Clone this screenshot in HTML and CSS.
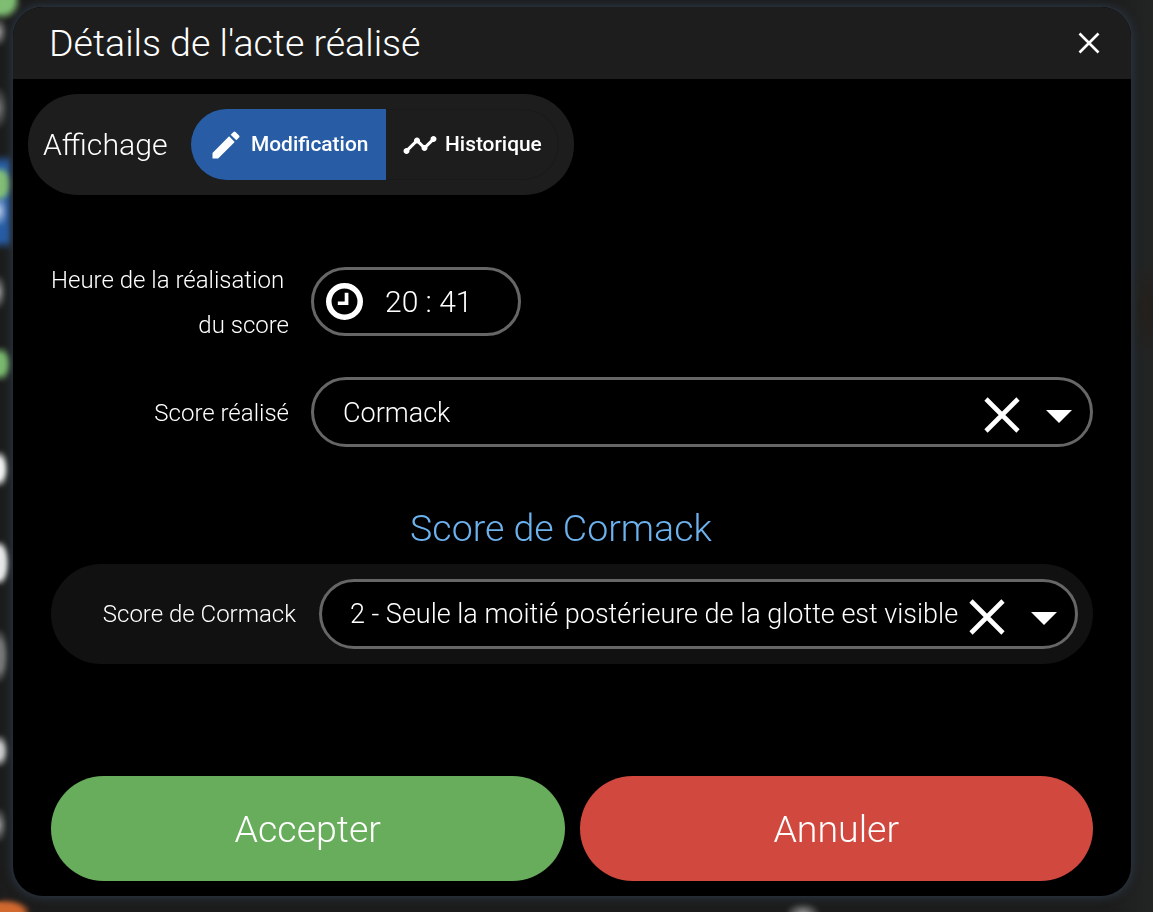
FILE: index.html
```html
<!DOCTYPE html>
<html lang="fr">
<head>
  <meta charset="UTF-8" />
  <meta name="viewport" content="width=device-width, initial-scale=1.0" />
  <title>Détails de l'acte réalisé</title>
  <link rel="stylesheet" href="styles.css">
</head>
<body>
  <div class="modal">
    <header class="modal-header">
      <h1>Détails de l'acte réalisé</h1>
      <svg class="close" viewBox="0 0 22 22"><path d="M1.5 1.5l19 19M20.5 1.5l-19 19" /></svg>
    </header>

    <div class="toolbar">
      <span class="toolbar-label">Affichage</span>
      <div class="toggle">
        <button class="toggle-btn edit active">
          <svg viewBox="0 0 24 24"><path d="M3 17.25V21h3.75L17.81 9.94l-3.75-3.75L3 17.25zM20.71 7.04a1 1 0 0 0 0-1.41l-2.34-2.34a1 1 0 0 0-1.41 0l-1.83 1.83 3.75 3.75 1.83-1.83z" /></svg>
          <span>Modification</span>
        </button>
        <button class="toggle-btn history">
          <svg viewBox="0 0 24 24"><path d="M23 8c0 1.1-.9 2-2 2-.18 0-.35-.02-.51-.07l-3.56 3.55c.05.16.07.34.07.52 0 1.1-.9 2-2 2s-2-.9-2-2c0-.18.02-.36.07-.52l-2.55-2.55c-.16.05-.34.07-.52.07s-.36-.02-.52-.07l-4.55 4.56c.05.16.07.33.07.51 0 1.1-.9 2-2 2s-2-.9-2-2 .9-2 2-2c.18 0 .35.02.51.07l4.56-4.55C8.02 9.36 8 9.18 8 9c0-1.1.9-2 2-2s2 .9 2 2c0 .18-.02.36-.07.52l2.55 2.55c.16-.05.34-.07.52-.07s.36.02.52.07l3.55-3.56C19.02 8.35 19 8.18 19 8c0-1.1.9-2 2-2s2 .9 2 2z" /></svg>
          <span>Historique</span>
        </button>
      </div>
    </div>

    <div class="form">
      <div class="row row-time">
        <label>Heure de la réalisation&nbsp;<br>du score</label>
        <div class="field time">
          <svg class="clock" viewBox="0 0 36 36"><circle cx="18" cy="18" r="15.3" /><path d="M20 9.5V19.7H11.5" /></svg>
          <span>20 : 41</span>
        </div>
      </div>

      <div class="row row-score">
        <label>Score réalisé</label>
        <div class="field select">
          <span>Cormack</span>
          <svg class="clear" viewBox="0 0 36 36"><path d="M2 2l32 32M34 2L2 34" /></svg>
          <i class="caret"></i>
        </div>
      </div>

      <h2>Score de Cormack</h2>

      <div class="panel">
        <label>Score de Cormack</label>
        <div class="field select">
          <span>2 - Seule la moitié postérieure de la glotte est visible</span>
          <svg class="clear" viewBox="0 0 36 36"><path d="M2 2l32 32M34 2L2 34" /></svg>
          <i class="caret"></i>
        </div>
      </div>
    </div>

    <footer class="actions">
      <button class="btn accept">Accepter</button>
      <button class="btn cancel">Annuler</button>
    </footer>
  </div>
</body>
</html>
```
FILE: styles.css
```css
* {
  box-sizing: border-box;
}

body {
  margin: 0;
  height: 912px;
  padding: 7px 22px 16px 13px;
  overflow: hidden;
  font-family: Roboto, sans-serif;
  font-weight: 300;
  color: #fff;
  /* page behind the dialog */
  background:
    radial-gradient(circle at 3px 2px, #7fbd73 10px, transparent 18px),
    radial-gradient(ellipse 7px 15px at 0 32px, #999, transparent),
    radial-gradient(ellipse 8px 22px at 0 108px, #777, transparent),
    radial-gradient(ellipse 12px 18px at 1px 184px, #83bf78 60%, transparent),
    radial-gradient(ellipse 8px 16px at 0 211px, #b9cbe8, transparent),
    linear-gradient(transparent 154px, #285da6 164px, #285da6 240px, transparent 250px) 0 0 / 11px 100% no-repeat,
    radial-gradient(ellipse 6px 18px at 0 292px, #999, transparent),
    radial-gradient(ellipse 12px 18px at 1px 364px, #7ab96e 50%, transparent),
    radial-gradient(ellipse 9px 19px at 0 469px, #f2f2f2 50%, transparent),
    radial-gradient(ellipse 10px 23px at 0 563px, #e8e8e8 65%, transparent),
    radial-gradient(ellipse 9px 28px at 0 656px, #777 50%, transparent),
    radial-gradient(ellipse 9px 17px at 0 751px, #ccc 40%, transparent),
    radial-gradient(ellipse 7px 18px at 0 825px, #999, transparent),
    radial-gradient(ellipse 26px 13px at 5px 912px, #d2692f 65%, transparent),
    radial-gradient(ellipse 18px 11px at 803px 914px, #aaa, transparent),
    radial-gradient(ellipse 30px 50px at 1153px 310px, #241f1a, transparent),
    linear-gradient(90deg, #1c1c1c 96%, #232525);
}

body::before {
  content: "";
  position: fixed;
  inset: 0;
  backdrop-filter: blur(2px);
}

.modal {
  position: relative;
  height: 889px;
  background: #000;
  border-radius: 30px;
  box-shadow: 0 0 8px 2px #2a3642;
  overflow: hidden;
}

.modal-header {
  display: flex;
  justify-content: space-between;
  align-items: center;
  height: 72px;
  padding: 0 31px 0 36px;
  background: #1d1d1d;
}

h1 {
  margin: 0 0 1px;
  font-size: 37.5px;
  font-weight: 300;
}

.close {
  width: 22px;
  height: 22px;
}

.close path {
  stroke: #fff;
  stroke-width: 2.6;
}

.toolbar {
  display: flex;
  align-items: center;
  width: 546px;
  height: 101px;
  margin: 15px 0 0 15px;
  padding: 15px;
  border-radius: 50px;
  background: #1d1d1d;
}

.toolbar-label {
  width: 148px;
  font-size: 30.2px;
}

.toggle {
  display: flex;
  width: 368px;
  height: 71px;
  border-radius: 36px;
  box-shadow: inset 0 0 0 1px #1a1a1a;
  overflow: hidden;
}

.toggle-btn {
  display: flex;
  align-items: center;
  border: 0;
  padding: 0 0 0 17px;
  gap: 7px;
  background: none;
  color: #fff;
  font: 500 20.9px Roboto, sans-serif;
}

.toggle-btn svg {
  width: 36px;
  height: 36px;
  fill: #fff;
}

.toggle-btn span {
  margin-top: -2px;
}

.toggle-btn.edit {
  width: 195px;
}

.toggle-btn.history {
  padding-left: 16px;
}

.toggle-btn.active {
  background: #285da6;
}

.form {
  height: 581px;
  padding: 63px 38px 0;
}

.row {
  display: flex;
  align-items: center;
  gap: 22px;
}

label {
  width: 238px;
  font-size: 24px;
  line-height: 45px;
  text-align: right;
  white-space: nowrap;
}

.field {
  display: flex;
  align-items: center;
  height: 70px;
  border: 3px solid #666;
  border-radius: 35px;
  background: #000;
}

.time {
  width: 210px;
  height: 69px;
  margin-bottom: 3px;
  padding-left: 12px;
  gap: 23px;
  font-size: 30px;
}

.clock {
  width: 37px;
  height: 37px;
  fill: none;
  stroke: #fff;
  stroke-width: 5.4;
}

.clock path {
  stroke-width: 3.6;
}

.time span {
  margin-left: -1px;
}

.select {
  flex: 1;
  padding: 0 18px 0 28px;
  font-size: 27px;
  white-space: nowrap;
}

.select span {
  flex: 1;
}

.clear {
  width: 36px;
  height: 36px;
  margin: 6px 26px 0 0;
}

.clear path {
  stroke: #fff;
  stroke-width: 4.6;
}

.caret {
  margin-top: 8px;
  border: 13px solid transparent;
  border-top-color: #fff;
  border-bottom: 0;
}

.row-score {
  margin-top: 29px;
}

.row-score label,
.row-score span {
  padding-top: 2px;
}

.row-score .select {
  padding-left: 29px;
}

h2 {
  margin: 58px 22px 0 0;
  font-size: 37.5px;
  font-weight: 300;
  line-height: 46px;
  text-align: center;
  color: #6cb2ee;
}

.panel {
  display: flex;
  align-items: center;
  gap: 23px;
  height: 100px;
  margin-top: 13px;
  padding: 0 15px 0 7px;
  border-radius: 50px;
  background: #111;
}

.actions {
  display: flex;
  gap: 15px;
  padding: 0 38px;
}

.btn {
  flex: 1;
  height: 105px;
  border: 0;
  border-radius: 53px;
  color: #fff;
  font: 300 37.5px Roboto, sans-serif;
}

.accept {
  background: #68ad5c;
}

.cancel {
  background: #d1483f;
}
```
